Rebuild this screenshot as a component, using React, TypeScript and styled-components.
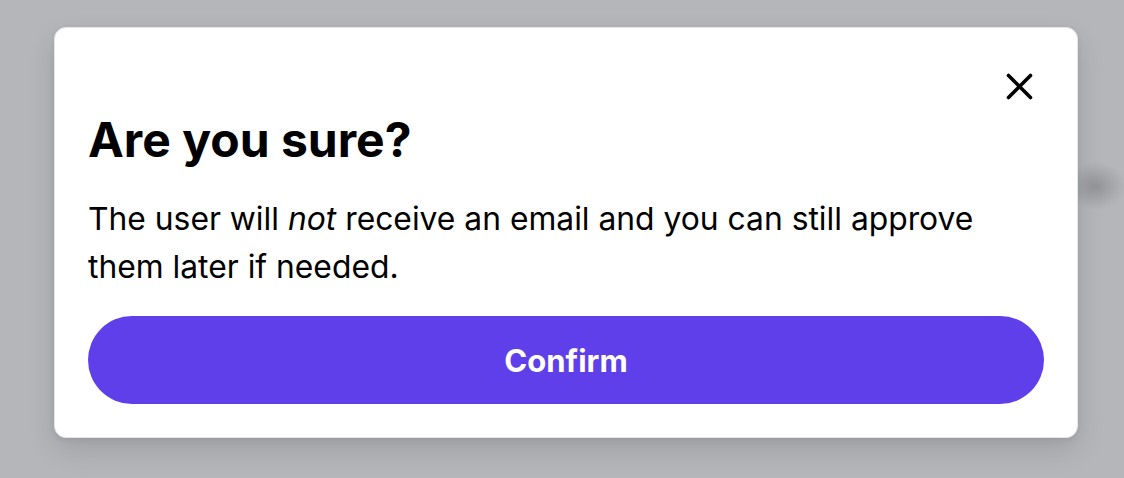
import React from "react";
import styled, { createGlobalStyle } from "styled-components";

const Global = createGlobalStyle`
  html, body { margin: 0; padding: 0; }
  body {
    width: 1124px;
    height: 478px;
    overflow: hidden;
    background:
      radial-gradient(ellipse 30px 24px at 1096px 186px, rgba(120,120,124,0.55), rgba(120,120,124,0) 100%),
      #b5b6ba;
    font-family: Inter, "Noto Sans", sans-serif;
  }
`;

const Overlay = styled.div`
  display: flex;
  justify-content: center;
  padding: 27px 0 0 8px;
`;

const Card = styled.div`
  box-sizing: border-box;
  width: 1024px;
  height: 411px;
  background: #ffffff;
  border: 1px solid #e4e5e8;
  border-radius: 12px;
  box-shadow: 0 12px 28px rgba(0, 0, 0, 0.12), 0 2px 6px rgba(0, 0, 0, 0.06);
  padding: 33px;
  display: flex;
  flex-direction: column;
`;

const TopRow = styled.div`
  display: flex;
  justify-content: flex-end;
  height: 50px;
`;

const CloseButton = styled.button`
  width: 50px;
  height: 50px;
  border: none;
  background: transparent;
  padding: 0;
  display: flex;
  align-items: center;
  justify-content: center;
  cursor: pointer;
  color: #000;
`;

const Title = styled.h2`
  margin: 0;
  font-size: 48px;
  line-height: 58px;
  font-weight: 700;
  color: #000;
`;

const Body = styled.p`
  margin: 26px 0 0 0;
  font-size: 31.8px;
  line-height: 48px;
  font-weight: 400;
  color: #000;
`;

const ConfirmButton = styled.button`
  margin-top: 25px;
  height: 88px;
  border: none;
  border-radius: 44px;
  background: #5f3fea;
  color: #ffffff;
  font-family: Inter, "Noto Sans", sans-serif;
  font-size: 31px;
  font-weight: 700;
  cursor: pointer;
`;

export default function App() {
  return (
    <>
      <Global />
      <Overlay>
        <Card>
          <TopRow>
            <CloseButton aria-label="Close">
              <svg width="27" height="27" viewBox="0 0 27 27" fill="none">
                <path d="M2.5 2.5 L24.5 24.5 M24.5 2.5 L2.5 24.5" stroke="#000" strokeWidth="3.6" strokeLinecap="round" />
              </svg>
            </CloseButton>
          </TopRow>
          <Title>Are you sure?</Title>
          <Body>
            The user will <em>not</em> receive an email and you can still approve them later if needed.
          </Body>
          <ConfirmButton>Confirm</ConfirmButton>
        </Card>
      </Overlay>
    </>
  );
}
